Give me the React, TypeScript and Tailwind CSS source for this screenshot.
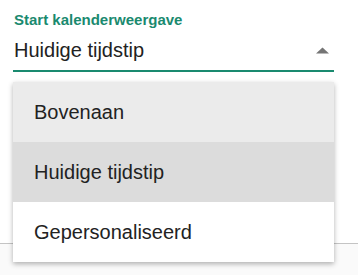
import React from 'react';

const options = ['Bovenaan', 'Huidige tijdstip', 'Gepersonaliseerd'];

export default function App() {
  const selected = 'Huidige tijdstip';

  return (
    <div
      className="relative w-[358px] h-[275px] overflow-hidden bg-white flex flex-col"
      style={{ fontFamily: '"Liberation Sans", Arial, sans-serif' }}
    >
      {/* Select field */}
      <div className="h-[243px] px-[13px] pt-[11px]">
        <label className="block pl-px text-[15px] leading-[17px] font-bold text-[#1a8a6f]">
          Start kalenderweergave
        </label>
        <div className="w-[321px] h-[44px] pt-[2px] flex items-center justify-between border-b-2 border-[#1a8a6f] pl-px pr-[4px]">
          <span className="text-[20px] text-[#222] leading-none">{selected}</span>
          <svg width="13" height="7" viewBox="0 0 13 7" className="mr-[1px]">
            <path d="M0 6.5 L6.5 0.5 L13 6.5 Z" fill="#757575" />
          </svg>
        </div>
      </div>

      {/* Page behind */}
      <div className="flex-1 border-t border-[#c4c4c4] bg-[#fafafa]" />

      {/* Dropdown menu */}
      <ul className="absolute left-[13px] top-[82px] w-[321px] bg-white shadow-[0_2px_5px_rgba(0,0,0,0.3)]">
        {options.map((o, i) => (
          <li
            key={o}
            className={
              'h-[60px] flex items-center pl-[21px] text-[20px] text-[#222] ' +
              (o === selected ? 'bg-[#dcdcdc]' : i === 0 ? 'bg-[#ebebeb]' : 'bg-white')
            }
          >
            {o}
          </li>
        ))}
      </ul>
    </div>
  );
}
